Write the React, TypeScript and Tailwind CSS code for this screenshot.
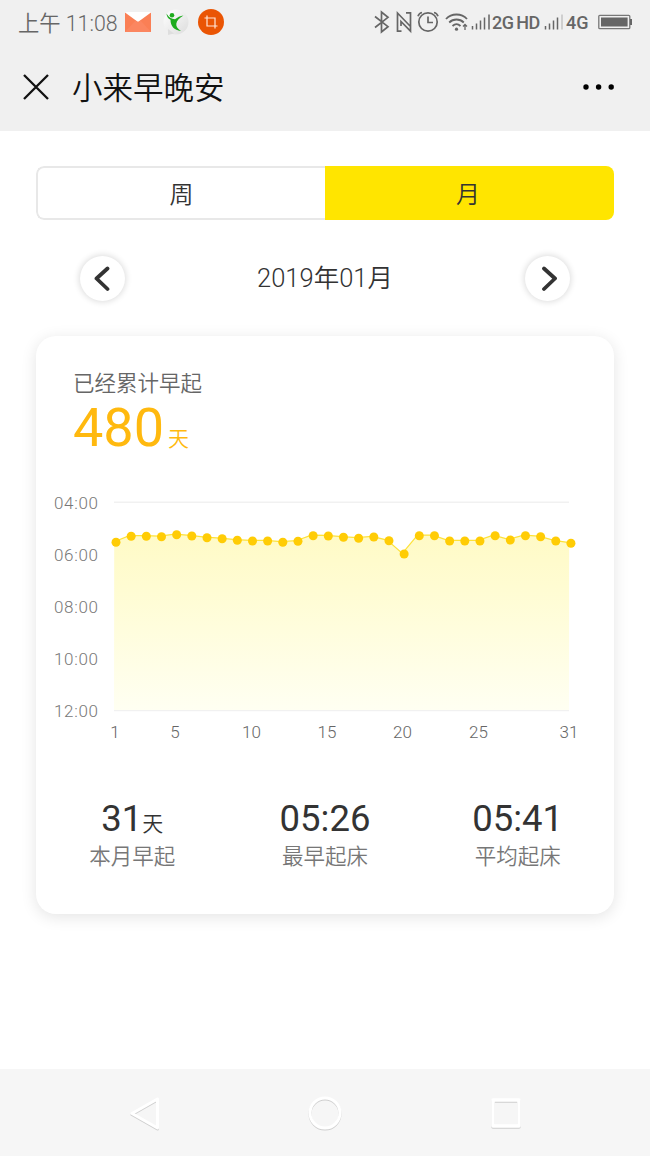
import { ReactNode } from 'react'

const wakeUps = [
  40.3, 34.3, 34.3, 34.7, 32.7, 34, 35.7, 36.7, 38.3, 39, 39, 40.3, 39.3, 33.7, 34, 35.3,
  36.3, 35, 38.7, 52, 33.7, 33.7, 39, 39, 39, 33.7, 38, 33.7, 34.7, 39, 41.3,
]

const hours = ['04:00', '06:00', '08:00', '10:00', '12:00']

const days: { label: string; x: number }[] = [
  { label: '1', x: 79 },
  { label: '5', x: 139 },
  { label: '10', x: 215.5 },
  { label: '15', x: 291 },
  { label: '20', x: 366.5 },
  { label: '25', x: 442.5 },
  { label: '31', x: 533 },
]

const stats = [
  { value: '31', unit: '天', label: '本月早起' },
  { value: '05:26', unit: '', label: '最早起床' },
  { value: '05:41', unit: '', label: '平均起床' },
]

function Signal({ faded = false }: { faded?: boolean }) {
  return (
    <svg width="20" height="18" viewBox="0 0 20 18" fill="none" stroke="#666" strokeWidth="1.5" className="shrink-0">
      <path d="M1.5 16.5v-3.5M5.5 16.5v-6M9.5 16.5v-9M13.5 16.5v-12" />
      <path d="M18 16.5V1.5" stroke={faded ? '#c4c4c4' : '#666'} />
    </svg>
  )
}

function StatusBar() {
  return (
    <div className="flex h-11 items-center pl-[18px] text-[#666]">
      <span className="w-[107px] whitespace-nowrap pt-[3px] text-[21.3px] font-[350] leading-none text-[#666]">上午 11:08</span>
      <svg width="26" height="22" viewBox="0 0 26 22" className="shrink-0">
        <rect y="1" width="26" height="20" fill="#fff" />
        <path d="M0 1.5l13 9.5 13-9.5V21H0z" fill="#fa7f55" />
        <path d="M0 21l10.5-11.5L13 11l2.5-1.5L26 21z" fill="#fb8660" />
      </svg>
      <svg width="26" height="28" viewBox="0 0 26 28" className="ml-3 shrink-0">
        <defs>
          <linearGradient id="ball" x1="0" y1="0" x2="1" y2="1">
            <stop offset="0" stopColor="#fff" />
            <stop offset="1" stopColor="#dcdcdc" />
          </linearGradient>
        </defs>
        <circle cx="13" cy="14" r="12.5" fill="url(#ball)" />
        <path d="M5 21v6l6-1.500z" fill="#dedede" />
        <circle cx="9" cy="7.200" r="2.300" fill="#1cab1c" />
        <path d="M3.500 5.500c.2 3 1.500 5.200 4 6.300 0 6 3.500 10.700 10.500 11.200-3.500-2-5-4.500-4.700-7.200.4-3.300 2.700-5.300 7.200-8.300-3.500.5-6 1.800-8.500 3.800-3.500-.3-6.500-2-8.500-5.800z" fill="#1cab1c" />
      </svg>
      <svg width="26" height="26" viewBox="0 0 26 26" className="ml-[9px] shrink-0">
        <circle cx="13" cy="13" r="13" fill="#ea5504" />
        <path d="M9 6.500v10.500h10.500M6.500 9H17v10.500" fill="none" stroke="#ffe6d8" strokeWidth="1.200" />
      </svg>

      <svg width="16" height="24" viewBox="0 0 16 24" fill="none" stroke="#666" strokeWidth="1.700" className="ml-[150px] shrink-0">
        <path d="M1 6.500l13 10.200-6.500 5.300V2l6.500 5.300L1 17.500" />
      </svg>
      <svg width="16" height="24" viewBox="0 0 16 24" fill="none" stroke="#666" strokeWidth="1.700" className="ml-[6px] shrink-0">
        <path d="M5.500 21.200H1.500V3l13 13.500M10 2.800h4.500v18.400L5 11.500V16" />
      </svg>
      <svg width="22" height="24" viewBox="0 0 22 24" fill="none" stroke="#666" strokeWidth="1.700" className="ml-[5px] shrink-0">
        <circle cx="11" cy="12" r="9.200" />
        <path d="M11 6.500V12.500h5M1 6.200q1-3 4-3.700M21 6.200q-1-3-4-3.700" />
      </svg>
      <svg width="24" height="22" viewBox="0 0 24 22" fill="none" stroke="#666" strokeWidth="1.800" className="ml-[6px] shrink-0">
        <path d="M1 8c5.500-6 15.500-6 21 0M4.200 11.500c4-4 10.600-4 14.600 0M7.500 15c2.400-2.300 5.600-2.300 8 0" />
        <circle cx="11.500" cy="18.200" r="1.600" fill="#666" stroke="none" />
        <path d="M20 19v-5M18 15.500l2-2 2 2" strokeWidth="1.300" />
      </svg>
      <div className="ml-[2px] flex items-center">
        <Signal />
        <span className="ml-[1px] w-[52px] whitespace-nowrap text-[18px] font-medium tracking-[-0.6px]">
          2G<span className="ml-[3px]">HD</span>
        </span>
        <Signal faded />
        <span className="ml-[2px] w-[32px] text-[18px] font-medium">4G</span>
      </div>
      <svg width="35" height="16" viewBox="0 0 35 16" className="shrink-0">
        <rect x=".8" y="1.300" width="31" height="13.400" rx="1" fill="none" stroke="#777" strokeWidth="1.300" />
        <rect x="3" y="3.500" width="26.600" height="9" fill="#666" />
        <rect x="32" y="5" width="2" height="6" fill="#666" />
      </svg>
    </div>
  )
}

function TitleBar() {
  return (
    <div className="flex h-[86px] items-center pl-[23px] pr-[35px]">
      <svg width="26" height="26" viewBox="0 0 26 26" stroke="#111" strokeWidth="2.300" className="shrink-0">
        <path d="M1 1l24 24M25 1L1 25" />
      </svg>
      <h1 className="ml-[23px] pt-[5px] text-[30.500px] font-[350] leading-none text-[#111]">小来早晚安</h1>
      <svg width="33" height="8" viewBox="0 0 33 8" className="ml-auto" fill="#000">
        <circle cx="4" cy="4" r="2.700" />
        <circle cx="16.600" cy="4" r="2.700" />
        <circle cx="29.200" cy="4" r="2.700" />
      </svg>
    </div>
  )
}

function RoundButton({ children, label }: { children: ReactNode; label: string }) {
  return (
    <button
      aria-label={label}
      className="flex size-[45px] items-center justify-center rounded-full bg-white shadow-[0_0_6px_1px_rgba(0,0,0,0.14)]"
    >
      <svg width="18" height="26" viewBox="0 0 18 26" fill="none" stroke="#333" strokeWidth="3.800" strokeLinecap="round" strokeLinejoin="round">
        {children}
      </svg>
    </button>
  )
}

function WakeUpChart() {
  const points = wakeUps.map((y, i) => ({ x: 80 + i * 15.165, y }))
  const line = points.map((p) => `${p.x - 1.8},${p.y - 0.6}`).join(' ')

  return (
    <svg width="578" height="250" viewBox="0 -10 578 250" className="block">
      <defs>
        <linearGradient id="area" x1="0" y1="0" x2="0" y2="1">
          <stop offset="0" stopColor="#fffac6" />
          <stop offset="0.3" stopColor="#fffcd2" />
          <stop offset="1" stopColor="#fffff2" />
        </linearGradient>
      </defs>
      <path d="M78 .2H533M78 208.500H533" stroke="#f1f1f1" strokeWidth="1.400" />
      <polygon points={`78,208 ${line} 533,208`} fill="url(#area)" />
      <polyline points={line} fill="none" stroke="#fde23a" strokeWidth="1.200" />
      {points.map((p) => (
        <circle key={p.x} cx={p.x} cy={p.y} r="4.500" fill="#ffcc05" />
      ))}
      {hours.map((h, i) => (
        <text key={h} x="18" y={7 + i * 52} textLength="44" fontSize="17" fontWeight="300" fill="#777">
          {h}
        </text>
      ))}
      {days.map((d) => (
        <text key={d.label} x={d.x} y="236" textAnchor="middle" fontSize="17" fontWeight="350" fill="#666">
          {d.label}
        </text>
      ))}
    </svg>
  )
}

function NavBar() {
  return (
    <nav className="flex h-[87px] items-center justify-between bg-[#f6f6f6] px-[128px]">
      <svg width="34" height="38" viewBox="0 0 34 38" fill="none" strokeWidth="3" strokeLinejoin="round" className="drop-shadow-[0_1px_0.5px_rgba(0,0,0,0.16)]">
        <path d="M29.500 5v29L4 19.500z" stroke="#fff" />
      </svg>
      <svg width="38" height="38" viewBox="0 0 38 38" fill="none" className="drop-shadow-[0_1px_0.5px_rgba(0,0,0,0.16)]">
        <circle cx="19" cy="19" r="15" stroke="#fff" strokeWidth="3" />
      </svg>
      <svg width="34" height="38" viewBox="0 0 34 38" fill="none" className="drop-shadow-[0_1px_0.5px_rgba(0,0,0,0.16)]">
        <rect x="5" y="6" width="26" height="26" stroke="#fff" strokeWidth="3.500" strokeLinejoin="round" />
      </svg>
    </nav>
  )
}

export default function App() {
  return (
    <div className="flex h-[1156px] w-[650px] flex-col overflow-hidden bg-white font-['Roboto','Noto_Sans_CJK_SC',sans-serif] text-[#333]">
      <header className="h-[131px] shrink-0 bg-[#f0f0f0]">
        <StatusBar />
        <TitleBar />
      </header>

      <main className="flex-1 px-9 pt-[35px]">
        {/* Week / month switch */}
        <div className="flex h-[54px] overflow-hidden rounded-lg text-2xl font-[350]">
          <button className="w-[289px] rounded-l-lg border-2 border-r-0 border-[#e8e8e8] pt-[3px]">周</button>
          <button className="w-[289px] bg-[#ffe500] pr-[3px] pt-[3px]">月</button>
        </div>

        <div className="mt-9 flex h-[45px] items-center justify-between px-11">
          <RoundButton label="上个月">
            <path d="M13.500 2.500L2.500 12.500l11 10.500" />
          </RoundButton>
          <span className="text-[25.500px] font-[350] leading-none">2019年01月</span>
          <RoundButton label="下个月">
            <path d="M5 2.500L16 12.500 5 23" />
          </RoundButton>
        </div>

        <section className="mt-[35px] h-[578px] rounded-[20px] bg-white shadow-[0_3px_16px_rgba(0,0,0,0.11)]">
          <div className="pl-[37px] pt-[37px]">
            <p className="text-[21.500px] font-[350] leading-[22px] text-[#666]">已经累计早起</p>
            <p className="flex items-baseline leading-[66px] text-[#ffb90f]">
              <span className="text-[54px]">480</span>
              <span className="ml-1 text-[21px] font-[350]">天</span>
            </p>
          </div>

          <div className="mt-5">
            <WakeUpChart />
          </div>

          <div className="mt-[57px] grid grid-cols-3 text-center">
            {stats.map((s) => (
              <div key={s.label}>
                <p className="h-10 text-[36.500px] leading-[40px]">
                  {s.value}
                  {s.unit && <span className="text-[21px] font-[350]">{s.unit}</span>}
                </p>
                <p className="mt-[7px] text-[21.500px] font-[350] leading-[22px] text-[#777]">{s.label}</p>
              </div>
            ))}
          </div>
        </section>
      </main>

      <NavBar />
    </div>
  )
}
